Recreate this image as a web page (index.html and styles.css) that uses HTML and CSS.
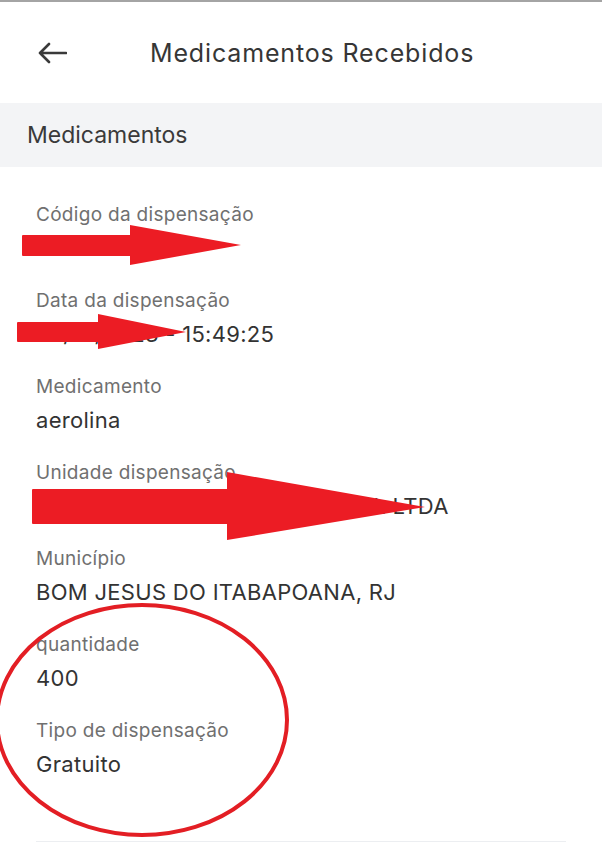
FILE: index.html
```html
<!DOCTYPE html>
<html lang="pt-BR">
<head>
<meta charset="utf-8">
<title>Medicamentos Recebidos</title>
<link rel="stylesheet" href="styles.css">
</head>
<body>
<div class="screen">
  <header class="appbar">
    <svg class="back" width="30" height="22" viewBox="0 0 30 22" aria-hidden="true">
      <path d="M29 11H3M12 2L3 11l9 9" fill="none" stroke="#3a3a3a" stroke-width="2.6" stroke-linecap="round" stroke-linejoin="round"/>
    </svg>
    <h1 class="title">Medicamentos Recebidos</h1>
  </header>

  <div class="section">Medicamentos</div>

  <dl class="details">
    <div class="item"><dt>Código da dispensação</dt><dd>123456789</dd></div>
    <div class="item"><dt>Data da dispensação</dt><dd>25/01/2023 - 15:49:25</dd></div>
    <div class="item"><dt>Medicamento</dt><dd>aerolina</dd></div>
    <div class="item"><dt>Unidade dispensação</dt><dd>FARMÁCIA POPULAR DO BRASIL LTDA</dd></div>
    <div class="item"><dt>Município</dt><dd>BOM JESUS DO ITABAPOANA, RJ</dd></div>
    <div class="item"><dt>quantidade</dt><dd>400</dd></div>
    <div class="item"><dt>Tipo de dispensação</dt><dd>Gratuito</dd></div>
  </dl>
  <div class="divider"></div>

  <svg class="marks" width="602" height="844" viewBox="0 0 602 844" aria-hidden="true">
    <g fill="#ec1c24">
      <rect x="22" y="235" width="110" height="21" rx="1"/>
      <polygon points="130,225 241,245 130,265"/>
      <rect x="17" y="322" width="83" height="20" rx="1"/>
      <polygon points="98,314 186,332 98,349"/>
      <rect x="32" y="489" width="197" height="35" rx="1"/>
      <polygon points="227,472 425,507 227,540"/>
    </g>
    <ellipse cx="142" cy="720" rx="145" ry="115" fill="none" stroke="#e31e24" stroke-width="4"/>
  </svg>
</div>
</body>
</html>
```
FILE: styles.css
```css
* { box-sizing: border-box; }
html, body { margin: 0; padding: 0; background: #fff; }
body {
  font-family: Inter, "Noto Sans", "Liberation Sans", sans-serif;
  color: #333;
}
.screen {
  position: relative;
  width: 602px;
  height: 844px;
  overflow: hidden;
}
.appbar {
  height: 103px;
  border-top: 2px solid #a4a4a4;
  display: flex;
  align-items: center;
  padding-left: 37px;
  gap: 83px;
}
.back { display: block; flex: none; }
.title {
  margin: 0;
  font-size: 25px;
  letter-spacing: 0.85px;
  font-weight: 400;
  color: #363636;
  line-height: 30px;
}
.section {
  height: 64px;
  background: #f3f4f6;
  display: flex;
  align-items: center;
  padding-left: 27px;
  font-size: 23px;
  color: #3a3a3a;
}
.details {
  margin: 0;
  padding: 36px 36px 0;
  display: flex;
  flex-direction: column;
  gap: 27px;
}
.item { display: flex; flex-direction: column; gap: 7px; }
dt {
  font-size: 19px;
  letter-spacing: 0.3px;
  line-height: 24px;
  color: #707070;
}
dd {
  margin: 0;
  font-size: 22px;
  letter-spacing: 0.3px;
  line-height: 28px;
  color: #333;
  white-space: nowrap;
}
.divider {
  margin: 63px 36px 0;
  height: 1px;
  background: #eceef1;
}
.marks {
  position: absolute;
  left: 0;
  top: 0;
  pointer-events: none;
}
```
